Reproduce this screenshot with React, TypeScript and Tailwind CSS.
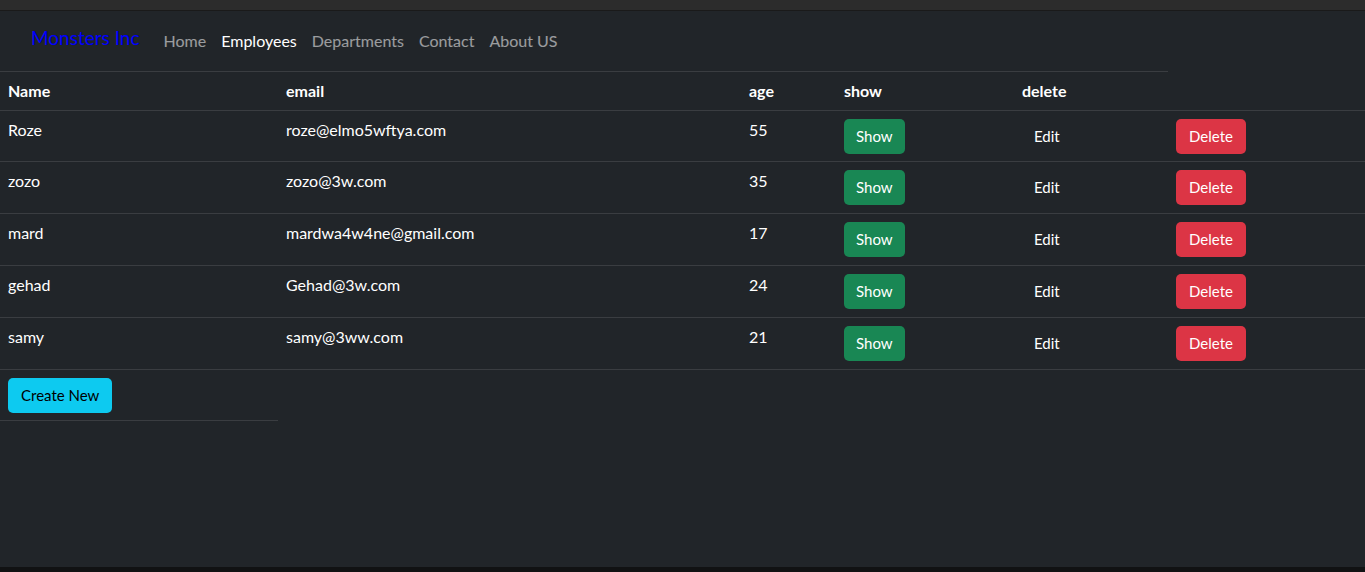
const employees = [
  { name: "Roze", email: "roze@elmo5wftya.com", age: 55 },
  { name: "zozo", email: "zozo@3w.com", age: 35 },
  { name: "mard", email: "mardwa4w4ne@gmail.com", age: 17 },
  { name: "gehad", email: "Gehad@3w.com", age: 24 },
  { name: "samy", email: "samy@3ww.com", age: 21 },
]

const links = ["Home", "Employees", "Departments", "Contact", "About US"]

export default function App() {
  return (
    <div className="flex h-[572px] flex-col bg-[#212529] font-['Lato','Noto_Sans',sans-serif] text-[16px] text-white">
      <div className="h-[11px] shrink-0 border-b border-[#1a1a1a] bg-[#2c2c2c]" />

      <div className="flex-1">
        {/* navbar */}
        <nav className="flex h-[61px] w-[1168px] items-center border-b border-[#3a3d41] pl-[31px]">
          <span className="-mt-[6px] mr-[24px] text-[19px] text-[#0000ff]">Monsters Inc</span>
          <div className="flex gap-[15px]">
            {links.map((l) => (
              <span key={l} className={l === "Employees" ? "text-white" : "text-white/55"}>
                {l}
              </span>
            ))}
          </div>
        </nav>

        {/* table */}
        <div className="flex h-[39px] items-center border-b border-[#3a3d41] font-bold">
          <div className="w-[278px] px-2">Name</div>
          <div className="w-[463px] px-2">email</div>
          <div className="w-[95px] px-2">age</div>
          <div className="w-[178px] px-2">show</div>
          <div className="w-[154px] px-2">delete</div>
        </div>
        {employees.map((e, i) => (
          <div
            key={e.name}
            className={`flex border-b border-[#3a3d41] ${i === 0 ? "h-[51px]" : "h-[52px]"}`}
          >
            <div className="w-[278px] px-2 pt-[7px]">{e.name}</div>
            <div className="w-[463px] px-2 pt-[7px]">{e.email}</div>
            <div className="w-[95px] px-2 pt-[7px]">{e.age}</div>
            <div className="w-[178px] px-2 pt-2">
              <button className="h-[35px] rounded-[5px] bg-[#198754] px-3 text-[15px]">Show</button>
            </div>
            <div className="w-[154px] px-2 pt-2">
              <button className="h-[35px] px-3 text-[15px]">Edit</button>
            </div>
            <div className="flex-1 px-2 pt-2">
              <button className="h-[35px] rounded-[5px] bg-[#dc3545] px-[13px] text-[15px]">Delete</button>
            </div>
          </div>
        ))}
        <div className="h-[51px] w-[278px] border-b border-[#3a3d41] px-2 pt-2">
          <button className="h-[35px] rounded-[5px] bg-[#0dcaf0] px-[13px] text-[15px] text-black">Create New</button>
        </div>
      </div>

      <div className="h-[5px] shrink-0 bg-[#111213]" />
    </div>
  )
}
